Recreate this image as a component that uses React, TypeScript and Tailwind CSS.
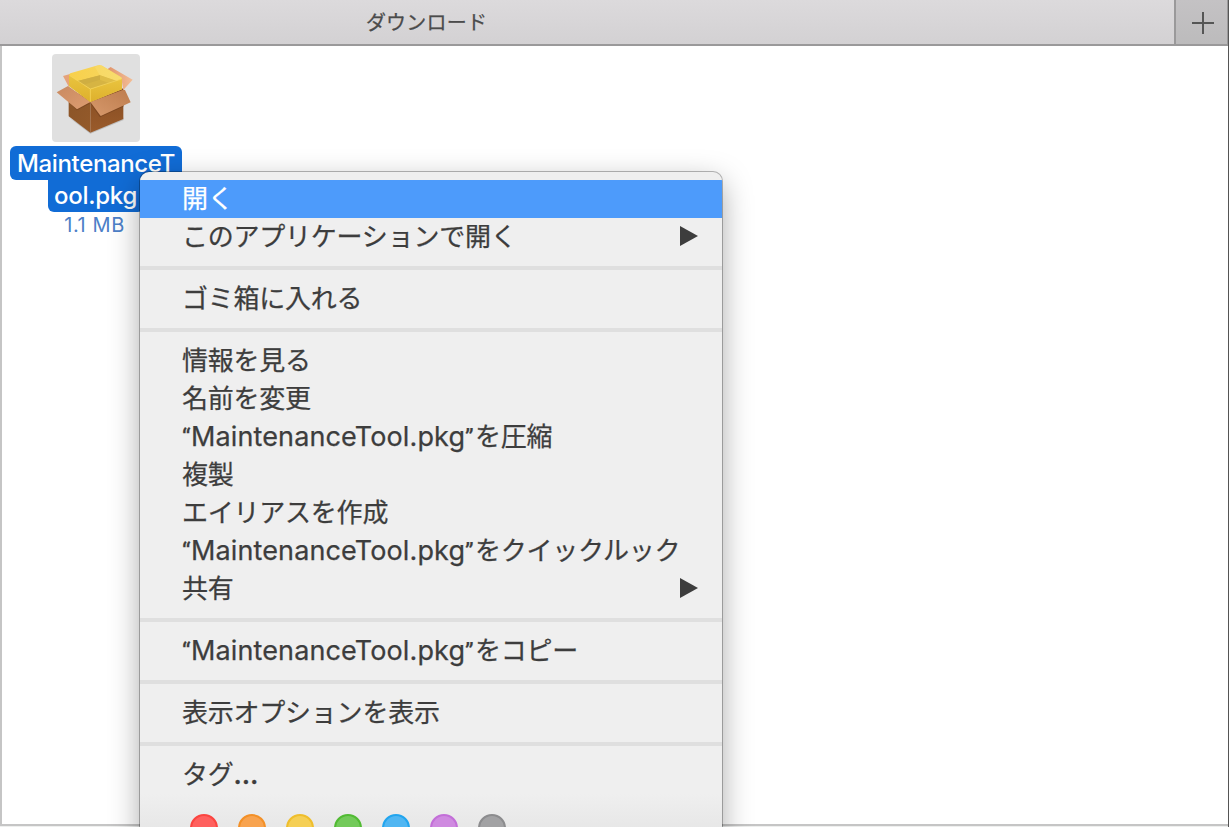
import React from "react";

type Item = { file?: boolean; text: string; active?: boolean; sub?: boolean; more?: boolean };

const groups: Item[][] = [
  [
    { text: "開く", active: true },
    { text: "このアプリケーションで開く", sub: true },
  ],
  [{ text: "ゴミ箱に入れる" }],
  [
    { text: "情報を見る" },
    { text: "名前を変更" },
    { file: true, text: "を圧縮" },
    { text: "複製" },
    { text: "エイリアスを作成" },
    { file: true, text: "をクイックルック" },
    { text: "共有", sub: true },
  ],
  [{ file: true, text: "をコピー" }],
  [{ text: "表示オプションを表示" }],
  [{ text: "タグ", more: true }],
];

const tags = [
  "bg-[#ff605e] border-[#fb4540]",
  "bg-[#f8a34f] border-[#f39027]",
  "bg-[#f5cf55] border-[#efbe2c]",
  "bg-[#73ca5a] border-[#51bb33]",
  "bg-[#50b6f2] border-[#22a5ee]",
  "bg-[#cf8ae0] border-[#c36fd8]",
  "bg-[#a2a2a4] border-[#8c8c8e]",
];

function PackageIcon() {
  return (
    <svg viewBox="156 42 264 264" className="h-[88px] w-[88px]">
      <defs>
        <linearGradient id="left" x1="0" y1="0" x2="1" y2="1">
          <stop offset="0" stopColor="#8a5428" />
          <stop offset="1" stopColor="#945a2a" />
        </linearGradient>
        <linearGradient id="right" x1="0" y1="0" x2="0" y2="1">
          <stop offset="0" stopColor="#854c22" />
          <stop offset="1" stopColor="#9a5b2b" />
        </linearGradient>
        <linearGradient id="flap" x1="0" y1="0" x2="1" y2="1">
          <stop offset="0" stopColor="#c98a61" />
          <stop offset="1" stopColor="#dd9c70" />
        </linearGradient>
        <linearGradient id="flapRight" x1="0" y1="1" x2="1" y2="0">
          <stop offset="0" stopColor="#d7996c" />
          <stop offset="1" stopColor="#bd7c4d" />
        </linearGradient>
        <linearGradient id="back" x1="0" y1="0" x2="1" y2="0">
          <stop offset="0" stopColor="#e0946a" />
          <stop offset="1" stopColor="#f3bd96" />
        </linearGradient>
        <linearGradient id="top" x1="0" y1="0" x2="1" y2="0">
          <stop offset="0" stopColor="#f8d04a" />
          <stop offset="1" stopColor="#f6d762" />
        </linearGradient>
        <linearGradient id="front" x1="0" y1="0" x2="0" y2="1">
          <stop offset="0" stopColor="#e9c43f" />
          <stop offset="1" stopColor="#deb02c" />
        </linearGradient>
      </defs>
      <path d="M206 232 271 281 371 240 369 230 271 272Z" fill="#999" opacity=".5" />
      <path d="M206 145 271 180V278L206 229Z" fill="url(#left)" />
      <path d="M271 180 370 145V237L271 278Z" fill="url(#right)" />
      <path d="M271 190 300 232 372 199V190L271 180Z" fill="#5f3316" opacity=".4" />
      <path d="M206 187 231 211 271 190Z" fill="#5f3316" opacity=".4" />
      <path d="M189 108 210 102V138H205Z" fill="#e6a27a" />
      <path d="M322 88 332 81 398 119 370 150 364 114Z" fill="url(#back)" />
      <path d="M204 138 170 157 231 208 271 186Z" fill="url(#flap)" />
      <path d="M271 186 370 149 375 150 392 187 302 228Z" fill="url(#flapRight)" />
      <path d="M209 104Q207 102 211 100L294 76Q301 74 307 77L363 111Q367 114 366 118V148L271 186 207 138Z" fill="url(#top)" />
      <path d="M207 105 271 148V186L207 138Z" fill="url(#front)" />
      <path d="M271 148 366 116V148L271 186Z" fill="url(#front)" />
      <path d="M233 123 300 106 350 123 271 147Z" fill="#d6b443" />
      <path d="M233 123 300 106V119L251 134Z" fill="#cfae42" />
      <path d="M300 106 350 123 328 130 300 119Z" fill="#dfbd48" />
      <path d="M284 80 301 75 366 114 350 123 300 106Z" fill="#fff2a0" opacity=".2" />
      <path d="M208 106 271 147 365 117M271 147V185" fill="none" stroke="#f7d85f" strokeWidth="2" />
    </svg>
  );
}

function Row({ item }: { item: Item }) {
  return (
    <div
      className={
        "flex h-[38px] items-center justify-between pl-[42px] pr-6 " +
        (item.active ? "bg-[#4d9bfb] text-white" : "text-[#3d3d3d]")
      }
    >
      <div className="flex h-[38px] items-baseline whitespace-nowrap [-webkit-text-stroke:0.25px_currentColor]">
        {item.file && (
          <span className="flex w-[293px] items-baseline text-[27px] leading-[38px]">
            <span className="w-[9px] font-['Roboto'] text-[24px] leading-[38px]">“</span>
            <span className="tracking-[0.12px]">MaintenanceTool.pkg</span>
            <span className="font-['Roboto'] text-[24px] leading-[38px]">”</span>
          </span>
        )}
        <span className="text-[26px] leading-[38px] tracking-[-0.23px]">{item.text}</span>
        {item.more && <span className="text-[26px] font-semibold leading-[38px]">…</span>}
      </div>
      {item.sub && (
        <svg viewBox="0 0 18 20" className="mb-0.5 h-5 w-[18px]">
          <path d="M0 0 18 10 0 20Z" fill="#3d3d3d" />
        </svg>
      )}
    </div>
  );
}

export default function App() {
  return (
    <div className="relative flex h-[827px] w-[1229px] flex-col overflow-hidden bg-[#eeefee] font-['Inter','Noto_Sans_CJK_JP',sans-serif]">
      <header className="flex h-[46px] shrink-0 border-b-2 border-[#9a999a] bg-linear-to-b from-[#dcdadc] to-[#d3d1d3]">
        <div className="flex flex-1 justify-center pr-[321px] pt-px text-[20px] leading-[44px] tracking-[0.2px] text-[#4b4b4b] [-webkit-text-stroke:0.25px_currentColor]">
          ダウンロード
        </div>
        <div className="flex w-[55px] items-center border-x-2 border-[#9a999a] bg-linear-to-b from-[#c4c2c4] to-[#bcbbbc] pl-4">
          <svg viewBox="0 0 22 22" className="mt-0.5 h-[22px] w-[22px]">
            <path d="M0 11H22M11 0V22" stroke="#555" strokeWidth="2" />
          </svg>
        </div>
      </header>
      <main className="h-[780px] shrink-0 border-b-2 border-l-2 border-[#c5c5c5] bg-white">
        <div className="ml-2 flex w-[172px] flex-col items-center pt-2">
          <div className="h-[88px] w-[88px] rounded-[4px] bg-[#e0e0e0]">
            <PackageIcon />
          </div>
          <div className="mt-1 h-[34px] w-[172px] rounded-[6px] bg-[#116cd6] text-center text-[24px] font-medium leading-[35px] tracking-[-0.35px] text-white">
            MaintenanceT
          </div>
          <div className="-mt-[6px] h-[38px] w-[96px] rounded-b-[6px] bg-[#116cd6] pr-px pt-[6px] text-center text-[24px] font-medium leading-[31px] tracking-[-0.25px] text-white">
            ool.pkg
          </div>
          <div className="mr-[3px] text-[20px] leading-[27px] tracking-[0.6px] text-[#4c80c8]">1.1 MB</div>
        </div>
      </main>
      <div className="absolute right-0 top-0 h-full w-px bg-[#555]" />
      <nav className="absolute left-[140px] top-[172px] h-[760px] w-[582px] overflow-hidden rounded-[9px] bg-[#efefef] pt-2 shadow-[0_0_0_1px_rgba(0,0,0,0.27),0_10px_30px_rgba(0,0,0,0.34)]">
        {groups.map((group, i) => (
          <section key={i}>
            {i > 0 && <div className="my-[10px] h-1 bg-[#dfdfdf]" />}
            {group.map((item) => (
              <Row key={item.text} item={item} />
            ))}
          </section>
        ))}
        <div className="flex gap-5 bg-linear-to-b from-[#efefef] to-[#e4e4e4] pl-[50px] pt-5">
          {tags.map((tag) => (
            <div key={tag} className={"h-7 w-7 rounded-full border-2 " + tag} />
          ))}
        </div>
      </nav>
    </div>
  );
}
